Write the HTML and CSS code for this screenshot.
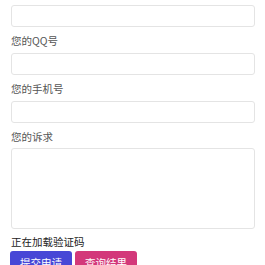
FILE: index.html
```html
<!DOCTYPE html>
<html lang="zh">
<head>
<meta charset="utf-8">
<link rel="stylesheet" href="styles.css">
</head>
<body>
<form class="form">
  <input class="field" type="text">
  <label class="label">您的QQ号</label>
  <input class="field" type="text">
  <label class="label">您的手机号</label>
  <input class="field" type="text">
  <label class="label label-tight">您的诉求</label>
  <textarea class="area"></textarea>
  <div class="captcha">正在加载验证码</div>
  <div class="actions">
    <button type="button" class="btn btn-blue">提交申请</button>
    <button type="button" class="btn btn-pink">查询结果</button>
  </div>
</form>
</body>
</html>
```
FILE: styles.css
```css
html, body {
  margin: 0;
  padding: 0;
  background: #fff;
}
body {
  font-family: "Noto Sans CJK SC", "Liberation Sans", sans-serif;
  font-size: 10.5px;
}
.form {
  display: flex;
  flex-direction: column;
  align-items: flex-start;
  padding: 5px 10px 0 11px;
}
.field {
  box-sizing: border-box;
  width: 244px;
  height: 22px;
  margin: 0 0 6px 0;
  border: 1px solid #e4e4e4;
  border-radius: 3px;
  background: #fff;
  padding: 0 6px;
}
.label {
  display: block;
  line-height: 16px;
  height: 16px;
  margin-bottom: 4px;
  color: #555;
}
.label-tight {
  margin-bottom: 3px;
}
.area {
  box-sizing: border-box;
  width: 244px;
  height: 81px;
  margin: 0 0 5px 0;
  border: 1px solid #e4e4e4;
  border-radius: 3px;
  resize: none;
}
.captcha {
  line-height: 16px;
  color: #222;
  margin-bottom: 1px;
}
.actions {
  display: flex;
  gap: 3px;
  margin-left: -1px;
}
.btn {
  font-family: inherit;
  font-size: 10.5px;
  color: #fff;
  border: none;
  border-radius: 3px;
  height: 24px;
  padding: 0 10px;
  line-height: 24px;
  white-space: nowrap;
  flex: none;
}
.btn-blue {
  background: #4747d6;
}
.btn-pink {
  background: #d3387a;
}
```
